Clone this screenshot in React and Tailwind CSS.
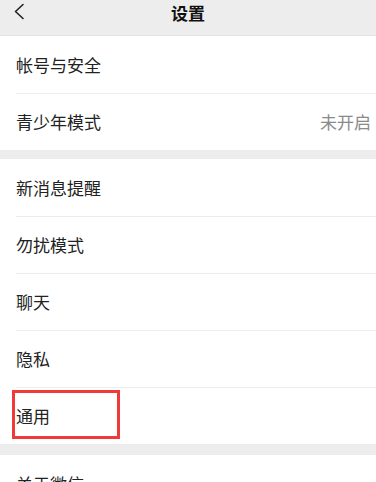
const groups = [
  [{ label: "帐号与安全" }, { label: "青少年模式", value: "未开启" }],
  [
    { label: "新消息提醒" },
    { label: "勿扰模式" },
    { label: "聊天" },
    { label: "隐私" },
    { label: "通用", marked: true },
  ],
  [{ label: "关于微信" }],
];

function Row({ item, first }) {
  return (
    <div className="relative h-[57px] bg-white pl-4">
      {!first ? <div className="h-px bg-[#ececec]" /> : null}
      <div
        className={`flex items-center justify-between pr-[5px] ${
          first ? "h-[57px]" : "h-[56px]"
        }`}
      >
        <span className="text-[17px] text-[#222]">{item.label}</span>
        {item.value ? (
          <span className="text-[17px] text-[#8a8a8a]">{item.value}</span>
        ) : null}
      </div>
      {item.marked ? (
        <div className="absolute left-3 top-[3px] h-[49px] w-[108px] border-[3px] border-[#f03a3a]" />
      ) : null}
    </div>
  );
}

export default function App() {
  return (
    <div
      className="h-[482px] w-[376px] overflow-hidden bg-[#ededed]"
      style={{ fontFamily: '"Noto Sans CJK SC", "Noto Sans", sans-serif' }}
    >
      {/* top bar */}
      <div className="relative flex h-[36px] items-center justify-center border-b border-[#e2e2e2]">
        <svg
          className="absolute left-[13px] top-[3px]"
          width="12"
          height="17"
          viewBox="0 0 12 17"
          fill="none"
        >
          <path
            d="M10 1.5 L2.5 8.5 L10 15.5"
            stroke="#222"
            strokeWidth="1.6"
            strokeLinecap="round"
            strokeLinejoin="round"
          />
        </svg>
        <span className="-mt-[10px] text-[17px] font-bold text-[#111]">设置</span>
      </div>

      <div>
        {groups[0].map((item, i) => (
          <Row key={item.label} item={item} first={i === 0} />
        ))}
      </div>
      <div className="mt-[9px]">
        {groups[1].map((item, i) => (
          <Row key={item.label} item={item} first={i === 0} />
        ))}
      </div>
      <div className="mt-[11px]">
        {groups[2].map((item, i) => (
          <Row key={item.label} item={item} first={i === 0} />
        ))}
      </div>
    </div>
  );
}
